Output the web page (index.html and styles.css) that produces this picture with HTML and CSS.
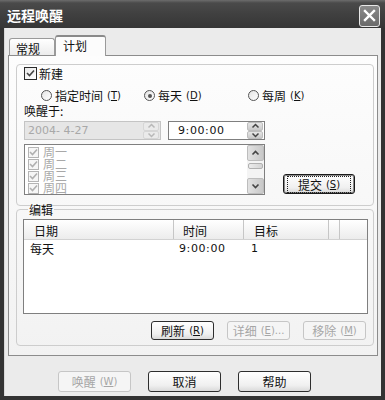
FILE: index.html
```html
<!DOCTYPE html>
<html lang="zh-CN">
<head>
    <meta charset="UTF-8">
    <meta name="viewport" content="width=device-width, initial-scale=1.0">
    <title>远程唤醒</title>
    <link rel="stylesheet" href="styles.css">
</head>
<body>
    <div class="window">
        <div class="titlebar">
            <span class="title">远程唤醒</span>
            <span class="close">
                <svg width="13" height="13" viewBox="0 0 13 13"><path d="M2 2 L11 11 M11 2 L2 11" stroke="#fff" stroke-width="2.4" stroke-linecap="square"/></svg>
            </span>
        </div>
        <div class="client">
            <div class="tabs">
                <div class="tab">常规</div>
                <div class="tab active">计划</div>
            </div>
            <div class="panel">
                <fieldset class="group group-new">
                    <label class="check">
                        <span class="box">
                            <svg width="9" height="9" viewBox="0 0 9 9"><path d="M1 4 L3.5 6.5 L8 1.5" fill="none" stroke="#444" stroke-width="1.6"/></svg>
                        </span>新建
                    </label>
                    <div class="radios">
                        <label class="radio r1"><span class="dot"></span>指定时间<span class="key">(<u>T</u>)</span></label>
                        <label class="radio r2"><span class="dot on"></span>每天<span class="key">(<u>D</u>)</span></label>
                        <label class="radio"><span class="dot"></span>每周<span class="key">(<u>K</u>)</span></label>
                    </div>
                    <div class="caption">唤醒于:</div>
                    <div class="when">
                        <div class="field date">
                            <span class="value">2004- 4-27</span>
                            <span class="spin">
                                <span class="arrow"><svg width="9" height="6" viewBox="0 0 9 6"><path d="M1.5 4.5 L4.5 1.5 L7.5 4.5" fill="none" stroke="#b8b8b8" stroke-width="1.5"/></svg></span>
                                <span class="arrow"><svg width="9" height="6" viewBox="0 0 9 6"><path d="M1.5 1.5 L4.5 4.5 L7.5 1.5" fill="none" stroke="#b8b8b8" stroke-width="1.5"/></svg></span>
                            </span>
                        </div>
                        <div class="field time">
                            <span class="value">9:00:00</span>
                            <span class="spin">
                                <span class="arrow"><svg width="9" height="6" viewBox="0 0 9 6"><path d="M1.5 4.5 L4.5 1.5 L7.5 4.5" fill="none" stroke="#444" stroke-width="1.5"/></svg></span>
                                <span class="arrow"><svg width="9" height="6" viewBox="0 0 9 6"><path d="M1.5 1.5 L4.5 4.5 L7.5 1.5" fill="none" stroke="#444" stroke-width="1.5"/></svg></span>
                            </span>
                        </div>
                    </div>
                    <div class="days-row">
                        <div class="days">
                            <ul class="day-list">
                                <li><span class="box off"><svg width="9" height="9" viewBox="0 0 9 9"><path d="M1 4 L3.5 6.5 L8 1.5" fill="none" stroke="#b0b0b0" stroke-width="1.6"/></svg></span>周一</li>
                                <li><span class="box off"><svg width="9" height="9" viewBox="0 0 9 9"><path d="M1 4 L3.5 6.5 L8 1.5" fill="none" stroke="#b0b0b0" stroke-width="1.6"/></svg></span>周二</li>
                                <li><span class="box off"><svg width="9" height="9" viewBox="0 0 9 9"><path d="M1 4 L3.5 6.5 L8 1.5" fill="none" stroke="#b0b0b0" stroke-width="1.6"/></svg></span>周三</li>
                                <li><span class="box off"><svg width="9" height="9" viewBox="0 0 9 9"><path d="M1 4 L3.5 6.5 L8 1.5" fill="none" stroke="#b0b0b0" stroke-width="1.6"/></svg></span>周四</li>
                            </ul>
                            <div class="vscroll">
                                <span class="sbtn"><svg width="9" height="6" viewBox="0 0 9 6"><path d="M1.5 4.5 L4.5 1.5 L7.5 4.5" fill="none" stroke="#444" stroke-width="1.6"/></svg></span>
                                <span class="track"><span class="thumb"></span></span>
                                <span class="sbtn"><svg width="9" height="6" viewBox="0 0 9 6"><path d="M1.5 1.5 L4.5 4.5 L7.5 1.5" fill="none" stroke="#444" stroke-width="1.6"/></svg></span>
                            </div>
                        </div>
                        <button class="btn default"><span class="focus">提交<span class="key">(<u>S</u>)</span></span></button>
                    </div>
                </fieldset>
                <fieldset class="group group-edit">
                    <legend>编辑</legend>
                    <div class="listview">
                        <div class="lv-head">
                            <span class="col c-date">日期</span>
                            <span class="col c-time">时间</span>
                            <span class="col c-target">目标</span>
                            <span class="col c-rest"></span>
                        </div>
                        <div class="lv-row">
                            <span class="cell c-date">每天</span>
                            <span class="cell c-time num">9:00:00</span>
                            <span class="cell c-target num">1</span>
                        </div>
                    </div>
                    <div class="actions">
                        <button class="btn small">刷新<span class="key">(<u>R</u>)</span></button>
                        <button class="btn small" disabled>详细<span class="key">(<u>E</u>)...</span></button>
                        <button class="btn small" disabled>移除<span class="key">(<u>M</u>)</span></button>
                    </div>
                </fieldset>
            </div>
            <div class="footer">
                <button class="btn wide" disabled>唤醒<span class="key">(<u>W</u>)</span></button>
                <button class="btn wide">取消</button>
                <button class="btn wide">帮助</button>
            </div>
        </div>
    </div>
</body>
</html>
```

FILE: styles.css
```css
*{
    padding: 0;
    margin: 0;
    box-sizing: border-box;
}
body{
    background: #2f2f2f;
    font-family: "Noto Sans CJK SC", "Noto Sans", sans-serif;
    font-size: 12px;
    line-height: 13px;
    color: #111;
}
.window{
    width: 385px;
    height: 400px;
    display: flex;
    flex-direction: column;
    background: #333;
}
.titlebar{
    height: 28px;
    display: flex;
    align-items: center;
    justify-content: space-between;
    padding: 0 5px 0 7px;
    background: linear-gradient(#6c6c6c 0, #4a4a4a 3px, #404040 50%, #363636 100%);
}
.title{
    color: #fff;
    font-weight: bold;
    font-size: 14px;
    line-height: 14px;
    margin-top: 2px;
}
.close{
    width: 21px;
    height: 22px;
    margin-top: 3px;
    border: 1px solid #e8e8e8;
    border-radius: 3px;
    background: linear-gradient(#8a8a8a, #6a6a6a);
    display: flex;
    align-items: center;
    justify-content: center;
}
.client{
    flex: 1;
    margin: 0 4px 4px 4px;
    background: #ebebeb;
    padding: 7px 4px 0 3px;
    border-left: 1px solid #d8d8d8;
}
.tabs{
    height: 20px;
    display: flex;
    align-items: flex-end;
    padding-left: 1px;
}
.tab{
    width: 46px;
    height: 17px;
    border: 1px solid #9a9a9a;
    border-bottom: none;
    border-radius: 3px 3px 0 0;
    background: linear-gradient(#ffffff, #ececec);
    padding: 3px 0 0 6px;
}
.tab.active{
    width: 51px;
    height: 21px;
    margin-bottom: -1px;
    position: relative;
    z-index: 1;
    background: #fcfcfc;
    border-top: 2px solid #8a8a8a;
    padding: 2px 0 0 7px;
}
.panel{
    width: 370px;
    height: 301px;
    border: 1px solid #8c8c8c;
    background: linear-gradient(#fdfdfd, #f2f2f2);
    padding: 8px 0 0 7px;
}
.group{
    border: 1px solid #cdcdcd;
    border-radius: 4px;
    width: 358px;
    min-inline-size: 0;
}
.group-new{
    height: 142px;
    padding: 2px 0 0 7px;
}
.check{
    display: flex;
    align-items: center;
    height: 13px;
}
.box{
    width: 13px;
    height: 13px;
    border: 1px solid #2a2a2a;
    background: linear-gradient(135deg, #e8e8e8, #ffffff);
    display: inline-flex;
    align-items: center;
    justify-content: center;
    margin-right: 2px;
}
.box.off{
    width: 11px;
    height: 11px;
    border-color: #b4b4b4;
    background: #f6f6f6;
    margin-right: 4px;
}
.radios{
    display: flex;
    height: 13px;
    margin-top: 9px;
    padding-left: 17px;
}
.radio{
    display: flex;
    align-items: center;
}
.r1{
    width: 103px;
}
.r2{
    width: 104px;
}
.dot{
    width: 11px;
    height: 11px;
    border: 1px solid #555;
    border-radius: 50%;
    background: linear-gradient(135deg, #e4e4e4, #ffffff);
    margin-right: 3px;
    display: inline-flex;
    align-items: center;
    justify-content: center;
}
.dot.on::after{
    content: "";
    width: 4px;
    height: 4px;
    border-radius: 50%;
    background: #555;
}
.key{
    font-family: "DejaVu Sans", sans-serif;
    font-size: 10px;
    margin-left: 4px;
}
.caption{
    margin-top: 2px;
    height: 13px;
}
.when{
    display: flex;
    margin-top: 4px;
    height: 19px;
}
.field{
    height: 19px;
    border: 1px solid #7f7f7f;
    background: #fff;
    display: flex;
    align-items: center;
    justify-content: space-between;
    padding: 0 1px 0 3px;
}
.field .value{
    font-family: "DejaVu Sans", sans-serif;
    font-size: 11px;
}
.date{
    width: 137px;
    background: #e6e6e6;
    border-color: #c4c4c4;
    color: #a8a8a8;
}
.time{
    width: 97px;
    margin-left: 7px;
    padding-left: 9px;
}
.time .value{
    letter-spacing: 0.6px;
}
.spin{
    width: 16px;
    height: 17px;
    display: flex;
    flex-direction: column;
}
.arrow{
    flex: 1;
    display: flex;
    align-items: center;
    justify-content: center;
    border: 1px solid #bdbdbd;
    border-radius: 2px;
    background: linear-gradient(#e6e6e6, #c9c9c9);
}
.date .arrow{
    background: #eaeaea;
    border-color: #d6d6d6;
}
.days-row{
    display: flex;
    align-items: flex-end;
    margin-top: 4px;
    height: 51px;
}
.days{
    width: 241px;
    height: 51px;
    border: 1px solid #7f7f7f;
    background: #fff;
    display: flex;
    justify-content: space-between;
}
.day-list{
    list-style: none;
    padding: 1px 0 0 3px;
    color: #a8a8a8;
}
.day-list li{
    height: 12px;
    line-height: 12px;
    display: flex;
    align-items: center;
}
.vscroll{
    width: 17px;
    display: flex;
    flex-direction: column;
    background: #f4f4f4;
}
.sbtn{
    height: 16px;
    display: flex;
    align-items: center;
    justify-content: center;
    border: 1px solid #bdbdbd;
    border-radius: 2px;
    background: linear-gradient(90deg, #e2e2e2, #c8c8c8);
}
.track{
    flex: 1;
    padding: 2px 1px 0;
}
.thumb{
    display: block;
    height: 6px;
    border: 1px solid #b0b0b0;
    border-radius: 2px;
    background: linear-gradient(90deg, #ececec, #d4d4d4);
}
.btn{
    font-family: inherit;
    font-size: 12px;
    line-height: 13px;
    color: #111;
    height: 20px;
    border: 1px solid #2e2e2e;
    border-radius: 3px;
    background: linear-gradient(#ffffff, #f0f0f0 70%, #dadada);
    display: flex;
    align-items: center;
    justify-content: center;
}
.btn:disabled{
    color: #a6a6a6;
    border-color: #c6c6c6;
    background: #f5f5f5;
}
.default{
    width: 72px;
    margin: 0 0 1px 18px;
    border-color: #1a1a1a;
    box-shadow: inset 0 0 0 1px #8a8a8a;
}
.focus{
    border: 1px dotted #222;
    padding: 1px 0;
    width: 64px;
    display: flex;
    justify-content: center;
}
.group-edit{
    height: 143px;
    margin-top: -3px;
    padding: 3px 0 0 6px;
}
.group-edit legend{
    margin-left: 5px;
    padding: 0 1px;
    line-height: 13px;
}
.listview{
    width: 345px;
    height: 95px;
    border: 1px solid #7f7f7f;
    background: #fff;
}
.lv-head{
    height: 20px;
    display: flex;
    background: linear-gradient(#ffffff, #ececec);
    border-bottom: 1px solid #d2d2d2;
}
.col{
    border-right: 1px solid #c6c6c6;
    padding: 4px 0 0 10px;
}
.lv-head .c-date{
    width: 150px;
}
.lv-head .c-time{
    width: 70px;
    padding-left: 9px;
}
.lv-head .c-target{
    width: 85px;
}
.lv-row{
    display: flex;
    height: 14px;
    padding-top: 2px;
}
.cell{
    padding-left: 6px;
}
.lv-row .c-date{
    width: 150px;
}
.lv-row .c-time{
    width: 70px;
    padding-left: 5px;
    letter-spacing: 0.6px;
}
.lv-row .c-target{
    padding-left: 7px;
}
.num{
    font-family: "DejaVu Sans", sans-serif;
    font-size: 11px;
}
.actions{
    display: flex;
    justify-content: flex-end;
    margin-top: 7px;
    padding-right: 7px;
    gap: 13px;
}
.small{
    width: 63px;
    height: 19px;
}
.footer{
    display: flex;
    padding: 15px 0 0 50px;
    gap: 17px;
}
.wide{
    width: 73px;
    height: 21px;
}
```
